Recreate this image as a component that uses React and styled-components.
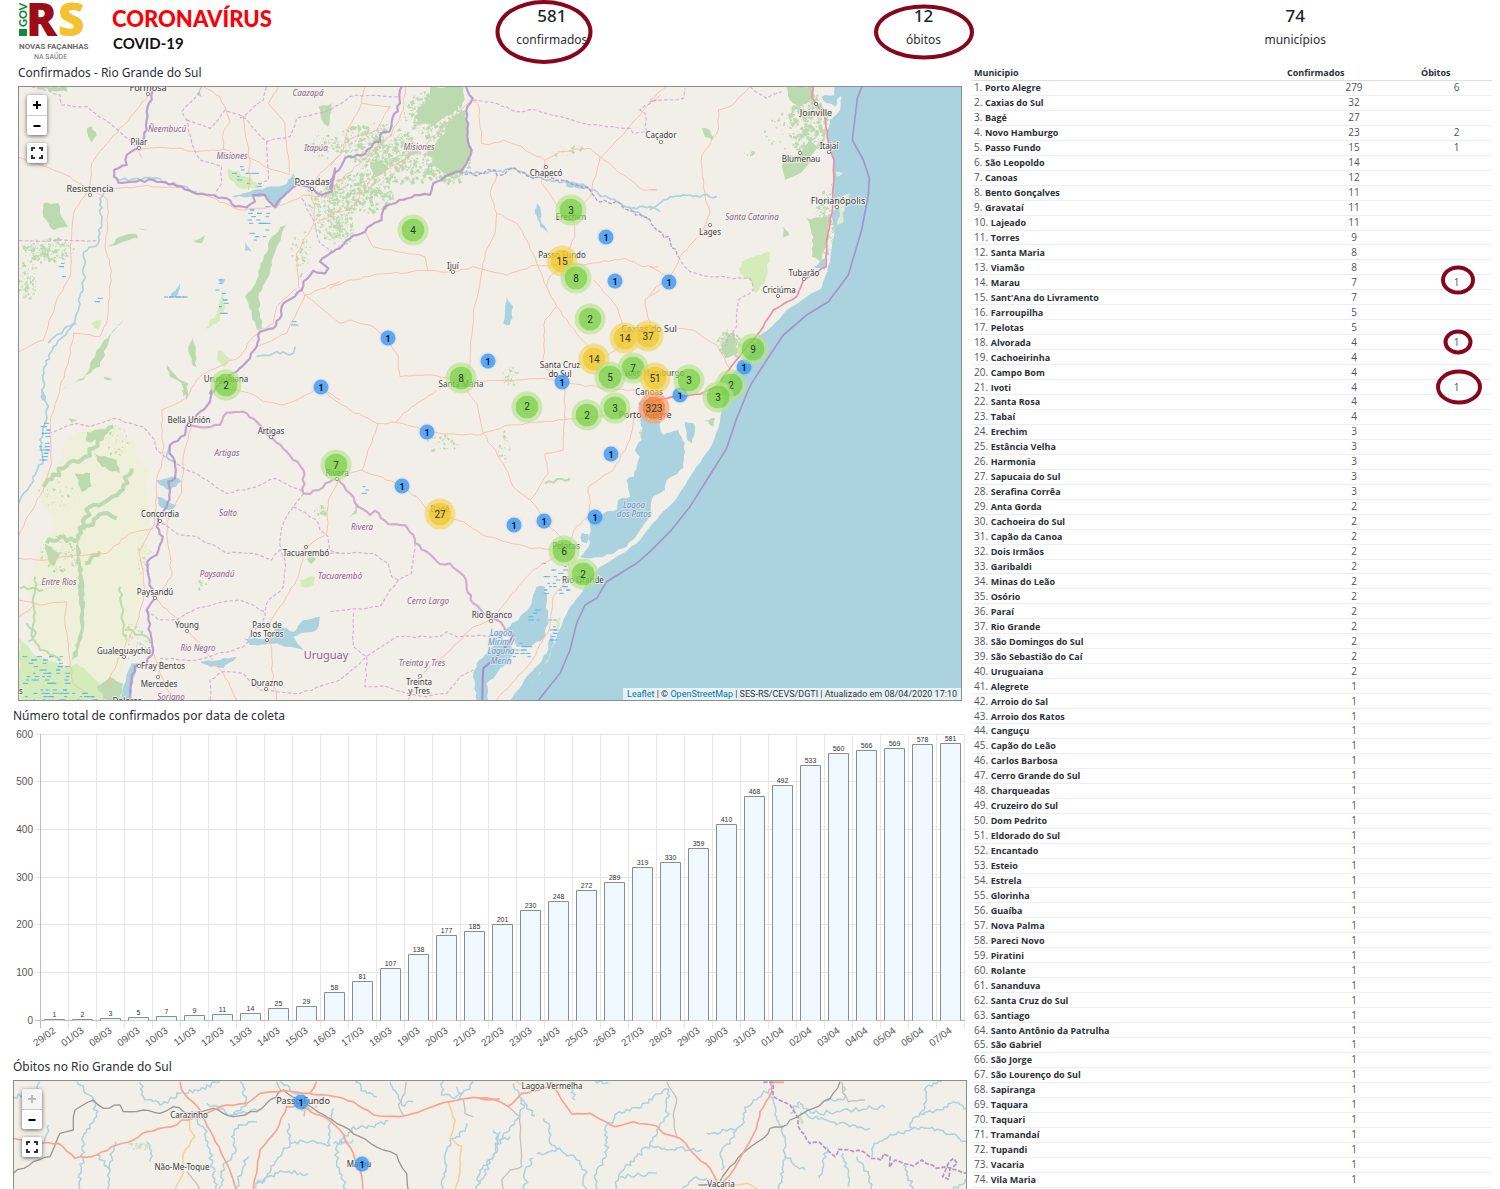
import React from "react";
import styled, { createGlobalStyle, css } from "styled-components";

const GlobalStyle = createGlobalStyle`
  *, *::before, *::after { box-sizing: border-box; }
  body { margin: 0; background: #fff; color: #2b2f36; font-family: "Noto Sans", "Open Sans", sans-serif; }
`;

/* ---------- layout ---------- */
const Page = styled.div`
  display: flex;
  flex-direction: column;
  min-height: 100vh;
`;
const Header = styled.header`
  display: grid;
  grid-template-columns: 366px repeat(3, 1fr);
  padding-right: 19px;
  height: 58px;
`;
const Counter = styled.div`
  position: relative;
  text-align: center;
  padding-top: 4px;
`;
const Total = styled.div`
  font-size: 17px;
  line-height: 24px;
  font-weight: 500;
  color: #212529;
`;
const Caption = styled.div`
  font-size: 12px;
  line-height: 24px;
`;
const Ring = styled.span`
  position: absolute;
  left: calc(50% + ${(p) => p.$dx}px);
  top: calc(50% + ${(p) => p.$dy}px);
  width: ${(p) => p.$w}px;
  height: ${(p) => p.$h}px;
  transform: translate(-50%, -50%);
  border: 4px solid #86061c;
  border-radius: 50%;
  pointer-events: none;
`;
const Main = styled.main`
  flex: 1;
  display: grid;
  grid-template-columns: 954fr 520fr;
  gap: 5px;
  padding: 0 8px 0 13px;
`;
const Column = styled.div`
  display: flex;
  flex-direction: column;
  min-width: 0;
`;
const Inset = styled.section`
  padding: 0 5px;
`;
const Title = styled.h2`
  margin: 6px 0 4px;
  font-size: 12px;
  line-height: 18px;
  font-weight: 400;
`;

/* ---------- maps ---------- */
const MapFrame = styled.div`
  position: relative;
  overflow: hidden;
  border: 1px solid #8b8f8c;
  background: #f2efe9;
  ${(p) =>
    p.$fill
      ? css`
          flex: 1 0 108px;
          border-bottom: 0;
        `
      : css`
          aspect-ratio: 944 / 615;
        `}
`;
const MapLayer = styled.div`
  position: absolute;
  top: 0;
  left: 0;
  width: 100%;
  aspect-ratio: ${(p) => p.$w} / ${(p) => p.$h};
`;
const MapSvg = styled.svg`
  display: block;
  width: 100%;
  height: 100%;
  font-family: "Noto Sans", "Open Sans", sans-serif;
`;
const Pin = styled.span`
  position: absolute;
  left: ${(p) => p.$x}%;
  top: ${(p) => p.$y}%;
  transform: translate(-50%, -50%);
  display: flex;
  align-items: center;
  justify-content: center;
  border-radius: 50%;
  font-family: Roboto, "Liberation Sans", sans-serif;
  font-size: 10px;
  line-height: 12px;
  color: #333;
`;
const Cluster = styled(Pin)`
  width: 31px;
  height: 31px;
  border: 4px solid ${(p) => p.$halo};
  background-clip: padding-box;
  background-color: ${(p) => p.$core};
`;
const Single = styled(Pin)`
  width: 15px;
  height: 15px;
  background: rgba(51, 150, 250, 0.8);
  box-shadow: 0 0 3px rgba(0, 0, 0, 0.15);
  font-size: 9px;
  font-weight: 700;
  color: #111;
`;
const Controls = styled.div`
  position: absolute;
  top: 8px;
  left: 8px;
  display: grid;
  gap: 8px;
`;
const ControlGroup = styled.div`
  display: grid;
  width: 20px;
  overflow: hidden;
  border-radius: 3px;
  background: #fff;
  box-shadow: 0 1px 4px rgba(0, 0, 0, 0.6);
`;
const ControlButton = styled.button`
  display: flex;
  align-items: center;
  justify-content: center;
  height: 20px;
  padding: 0;
  border: 0;
  background: #fff;
  color: #000;
  & + & { border-top: 1px solid #ccc; }
  &:disabled { background: #f4f4f4; color: #bbb; }
`;
const Attribution = styled.div`
  position: absolute;
  right: 0;
  bottom: 0;
  padding: 0 4px;
  background: rgba(255, 255, 255, 0.7);
  font-family: Roboto, "Liberation Sans", sans-serif;
  font-size: 9px;
  line-height: 12px;
  color: #333;
  a { color: #0078a8; text-decoration: none; }
`;

/* ---------- table ---------- */
const Aside = styled.aside`
  display: grid;
  padding: 8px 0 1px;
  min-width: 0;
`;
const Table = styled.table`
  width: 100%;
  height: 100%;
  table-layout: fixed;
  border-spacing: 0;
  font-family: "Open Sans", "Noto Sans", sans-serif;
  font-size: 10px;
  line-height: 13px;
`;
const Th = styled.th`
  width: ${(p) => p.$w};
  padding: 0 0 1px ${(p) => (p.$first ? 2 : 0)}px;
  border-bottom: 1px solid #dcdfe2;
  text-align: left;
  font-size: 9px;
  font-weight: 700;
`;
const Td = styled.td`
  position: relative;
  padding: 0;
  border-bottom: 1px solid #eceef0;
  text-align: center;
  color: #50545c;
`;
const Name = styled(Td)`
  padding-left: 2px;
  text-align: left;
  white-space: nowrap;
  b { font-size: 9px; font-weight: 700; color: #2b2f36; }
`;

const ChartSvg = styled.svg`
  display: block;
  width: 100%;
  font-family: "Liberation Sans", Arial, sans-serif;
`;
const LogoSvg = styled.svg`
  display: block;
  overflow: visible;
`;

/* ---------- data ---------- */
const CITIES = `Porto Alegre,279,6;Caxias do Sul,32;Bagé,27;Novo Hamburgo,23,2;Passo Fundo,15,1;São Leopoldo,14;Canoas,12;Bento Gonçalves,11;Gravataí,11;Lajeado,11;Torres,9;Santa Maria,8;Viamão,8;Marau,7,1;Sant'Ana do Livramento,7;Farroupilha,5;Pelotas,5;Alvorada,4,1;Cachoeirinha,4;Campo Bom,4;Ivoti,4,1;Santa Rosa,4;Tabaí,4;Erechim,3;Estância Velha,3;Harmonia,3;Sapucaia do Sul,3;Serafina Corrêa,3;Anta Gorda,2;Cachoeira do Sul,2;Capão da Canoa,2;Dois Irmãos,2;Garibaldi,2;Minas do Leão,2;Osório,2;Paraí,2;Rio Grande,2;São Domingos do Sul,2;São Sebastião do Caí,2;Uruguaiana,2;Alegrete,1;Arroio do Sal,1;Arroio dos Ratos,1;Canguçu,1;Capão do Leão,1;Carlos Barbosa,1;Cerro Grande do Sul,1;Charqueadas,1;Cruzeiro do Sul,1;Dom Pedrito,1;Eldorado do Sul,1;Encantado,1;Esteio,1;Estrela,1;Glorinha,1;Guaíba,1;Nova Palma,1;Pareci Novo,1;Piratini,1;Rolante,1;Sananduva,1;Santa Cruz do Sul,1;Santiago,1;Santo Antônio da Patrulha,1;São Gabriel,1;São Jorge,1;São Lourenço do Sul,1;Sapiranga,1;Taquara,1;Taquari,1;Tramandaí,1;Tupandi,1;Vacaria,1;Vila Maria,1`
  .split(";")
  .map((r) => r.split(","));

const ROW_RINGS = {
  Marau: { $w: 34, $h: 29, $dx: 1, $dy: -2 },
  Alvorada: { $w: 29, $h: 25, $dx: 1, $dy: 0 },
  Ivoti: { $w: 46, $h: 35, $dx: 2, $dy: 0 },
};

const VALUES = [1, 2, 3, 5, 7, 9, 11, 14, 25, 29, 58, 81, 107, 138, 177, 185, 201, 230, 248, 272, 289, 319, 330, 359, 410, 468, 492, 533, 560, 566, 569, 578, 581];
const two = (n) => String(n).padStart(2, "0");
const DATES = ["29/02", "01/03"];
for (let d = 8; d <= 31; d++) DATES.push(two(d) + "/03");
for (let d = 1; d <= 7; d++) DATES.push(two(d) + "/04");

/* Cluster colours by size */
const TONES = {
  g: ["rgba(122,210,70,.82)", "rgba(181,226,140,.65)"],
  y: ["rgba(240,200,40,.85)", "rgba(241,211,87,.65)"],
  o: ["rgba(241,128,45,.82)", "rgba(253,156,115,.7)"],
};
const CLUSTERS = [
  ["g", 4, 413, 230], ["g", 3, 571, 210], ["y", 15, 562, 261], ["g", 8, 576, 278],
  ["g", 2, 590, 319], ["y", 14, 625, 338], ["y", 37, 648, 336], ["y", 14, 594, 359], ["g", 9, 753, 349],
  ["g", 8, 461, 378], ["g", 2, 226, 385], ["g", 7, 633, 368], ["g", 5, 610, 377], ["y", 51, 655, 378],
  ["g", 3, 689, 380], ["g", 2, 731, 385], ["g", 3, 718, 397], ["g", 2, 527, 407], ["g", 2, 587, 415],
  ["g", 3, 615, 408], ["o", 323, 654, 408], ["g", 7, 336, 465], ["y", 27, 440, 514], ["g", 6, 564, 551], ["g", 2, 583, 574],
];
const SINGLES = [[606, 237], [615, 281], [669, 282], [388, 338], [488, 361], [562, 382], [321, 387], [744, 367], [680, 395], [427, 432], [611, 454], [402, 486], [514, 525], [544, 521], [595, 517]];

/* ---------- map drawing helpers ---------- */
/* A letter in a point list moves the origin to that sheet of the map. */
const SHEETS = { A: [0, 0], B: [960, 0], C: [1920, 0], E: [0, 930], F: [960, 930], G: [1920, 930], K: [1440, 0] };
function points(str) {
  let o = [0, 0];
  const out = [];
  str.split(/\s+/).forEach((t) => {
    if (!t) return;
    if (SHEETS[t]) o = SHEETS[t];
    else {
      const [x, y] = t.split(",").map(Number);
      if (!Number.isNaN(y)) out.push([x + o[0], y + o[1]]);
    }
  });
  return out;
}
function random(seed) {
  let s = seed * 9301 + 49297;
  return () => {
    s = (s * 1103515245 + 12345) % 2147483648;
    return s / 2147483648;
  };
}
function rough(str, amp = 4, step = 14, close = false) {
  const p = points(str);
  if (close) p.push(p[0]);
  const r = random(Math.round(p[0][0] + p[0][1] * 7));
  let d = `M${p[0][0]} ${p[0][1]}`;
  for (let i = 1; i < p.length; i++) {
    const [ax, ay] = p[i - 1];
    const [bx, by] = p[i];
    const len = Math.hypot(bx - ax, by - ay) || 1;
    const n = Math.max(1, Math.round(len / step));
    for (let k = 1; k <= n; k++) {
      const j = k === n ? 0 : (r() - 0.5) * 2 * amp;
      const x = ax + ((bx - ax) * k) / n - ((by - ay) / len) * j;
      const y = ay + ((by - ay) * k) / n + ((bx - ax) / len) * j;
      d += `L${x.toFixed(1)} ${y.toFixed(1)}`;
    }
  }
  return close ? d + "Z" : d;
}
function speckle(cx, cy, rx, ry, n, size) {
  const r = random(cx + cy * 3 + n);
  let d = "";
  for (let i = 0; i < n * 2; i++) {
    const a = r() * 6.283;
    const q = Math.pow(r(), 0.6);
    const x = cx + Math.cos(a) * rx * q;
    const y = cy + Math.sin(a) * ry * q;
    const s = size * 0.75 * (0.2 + r() * r() * 1.6);
    d += `M${x.toFixed(1)} ${y.toFixed(1)}l${s.toFixed(1)} ${(-s * r()).toFixed(1)}l${(s * r()).toFixed(1)} ${s.toFixed(1)}l${(-s).toFixed(1)} ${(s * r()).toFixed(1)}z`;
  }
  return d;
}
function marsh(cx, cy, rx, ry, n) {
  const r = random(cx * 2 + cy + n);
  let d = "";
  for (let i = 0; i < n; i++) {
    const x = cx + (r() * 2 - 1) * rx;
    const y = cy + Math.round((r() * 2 - 1) * (ry / 10)) * 10;
    d += `M${x.toFixed(0)} ${y.toFixed(0)}h${(8 + r() * 9).toFixed(0)}`;
  }
  return d;
}
const Lines = ({ list, amp, step, ...rest }) => (
  <g fill="none" strokeLinejoin="round" {...rest}>
    {list.map((s) => <path key={s} d={rough(s, amp, step)} />)}
  </g>
);
const Areas = ({ list, amp, step, ...rest }) => (
  <g {...rest}>
    {list.map((s) => <path key={s} d={rough(s, amp, step, true)} />)}
  </g>
);
const Speckles = ({ list, ...rest }) => (
  <g {...rest}>
    {list.map((s) => <path key={s.join()} d={speckle(...s)} />)}
  </g>
);

const NATIONAL = [
  "A 430,20 425,60 410,95 410,150 385,205 350,225 350,255 312,270 312,290 325,308 430,300 490,312 550,338 600,345 650,355 675,380 710,382 735,365 730,345 765,345 795,382 820,350 860,315 900,322 935,345 965,335 975,265 B 0,325 10,290 45,235 105,222 130,190 150,185 152,160 178,155 185,125 210,70 208,45 215,20",
  "B 408,20 428,55 412,80 412,170 425,210 410,250 390,275 355,285 310,310 300,345 255,345 175,375 160,390 155,420 125,435 105,455 60,475 30,505 0,520 A 965,515 930,545 955,565 945,580 910,572 880,605 875,630 820,670 815,705 790,745 750,755 740,800 710,845 670,880 640,905 600,940 E 605,0 600,35 560,75 535,100 525,135 480,165 478,190 495,215 495,265 475,275 480,305 470,350 450,375 440,410 458,440 440,495 412,515 418,585 435,625 410,660 415,690 430,780 410,820 375,830 365,870 362,935",
];
const URUGUAY = [
  "E 535,105 575,112 630,105 650,68 700,65 740,95 780,140 830,185 880,240 880,310 900,312 960,275 F 22,265 60,310 85,350 120,375 135,362 175,402 225,405 250,435 255,458 330,522 360,520 408,570 410,595 430,640 460,670 500,690 548,735",
];
const PROVINCES = [
  "A 65,20 150,45 155,75 230,80 300,130 385,205", "A 27,482 265,482",
  "A 575,20 550,60 515,95 530,120 545,190 570,240 635,260 635,310 615,340",
  "A 530,120 600,145 645,90 700,110 770,185 840,170 860,115 960,90 B 60,50 80,45 210,50",
  "A 770,185 775,300 740,320", "A 690,115 760,60 770,20", "A 875,355 915,430 930,490 965,515",
  "B 430,60 500,70 560,95 620,90 760,130 850,140 900,145 910,160 950,155 945,100 930,90 975,60 C 0,65 80,60 100,55 105,25",
  "C 300,20 350,55 395,35",
  "E 115,130 200,100 240,110 310,85 400,110 435,150 440,180 480,210 520,235 560,250 650,310 740,290 795,265 880,305",
  "E 410,660 445,690 500,690 560,655 620,640 690,630 765,665",
  "E 455,400 510,435 560,440 650,490 730,490 785,510 810,480 825,510 820,590 770,640 765,680 700,770 600,800 560,810 450,805",
  "E 880,310 850,350 820,400 810,450 815,480", "E 850,350 920,390 930,420 955,440 960,480 990,490",
  "F 0,490 60,490 130,490 175,520 185,560 205,570 245,550 250,500 255,458",
  "F 205,570 180,600 150,650 50,660 0,665",
  "F 70,670 70,770 110,800 200,740 330,740 350,725 380,740 500,735",
  "F 110,800 105,890 170,890 230,910 290,920 350,910 390,860 430,840",
  "E 600,930 600,870 640,845 700,850 750,900 870,910 990,870 F 110,800", "C 85,530 120,575 180,590 300,595 310,630 265,660 260,740 235,770 225,800",
];
const STATE_RIVER = ["B 390,275 430,285 495,270 500,285 555,265 600,290 690,300 720,310 780,330 800,360 870,370 910,395 960,420 990,455 C 60,480 85,530"];
const ROADS = [
  "A 415,45 380,90 300,180 245,250 240,320 190,400 185,470 180,590 140,660 100,780 27,815",
  "A 27,232 120,265 180,290 230,325 290,355 295,400 285,500 305,570 300,650 290,730 270,770 190,760 175,850 150,920 140,960 E 120,100 125,220 100,300 60,370 27,437",
  "A 300,330 400,318 510,322 600,350 690,390 750,385 830,370 880,345 925,350 960,340",
  "A 385,205 500,205 560,215 640,208 720,235 790,270 840,285", "A 385,205 395,232", "A 580,20 630,50 660,125 640,155 640,208",
  "A 805,20 775,70 825,130 840,280", "A 990,225 930,280 905,325", "A 905,325 915,420 860,520 865,620 885,645",
  "A 700,110 720,240 715,330", "A 990,390 920,430", "A 990,605 885,645 860,700 830,760 740,800",
  "A 885,645 940,690 990,730 B 60,720 130,740 180,790 205,830 210,890 300,885 400,905 460,905 560,900 640,895 720,910 830,925 920,930",
  "A 860,625 800,680 790,730 730,770 690,830 600,870 560,900 530,950 E 520,30 455,60 460,200 440,270 435,400 390,480 405,600 380,700 340,780 300,860 280,930",
  "E 545,100 520,200 515,310 470,400 485,560 440,620", "E 640,-5 720,10 760,35 820,45 900,10 930,-10 990,30",
  "E 27,505 110,510 200,495 290,490 360,430 430,415", "E 27,630 90,645 170,635 165,700 180,810 190,880 230,910",
  "E 27,680 80,640", "E 435,625 480,670 530,715 600,800 640,850 680,930", "E 985,270 955,330 950,430 890,470 860,570 780,700 785,840 800,930",
  "E 425,780 450,850 480,910",
  "B 105,20 95,70 50,160 40,210 0,260", "B 95,70 180,80 140,150 50,180", "B 225,20 220,90 180,170 100,240 0,330", "B 420,65 360,120 270,210 210,245 120,300 60,390 0,400",
  "B 425,60 445,75 455,190 475,195 520,180 560,195 645,240 690,215 780,205 810,230 870,280 940,330 980,330",
  "B 645,240 635,310 665,350 690,385", "B 810,230 780,350 725,400 735,470 700,550",
  "B 990,45 940,90 890,150 815,230", "B 500,285 480,340 500,400 495,460 465,520 450,610 430,700 420,850 400,900",
  "B 500,400 560,430 590,480 620,550 650,620 680,680 740,760 800,830", "B 0,625 60,600 150,582 295,572 380,575 430,560 530,585 620,555 760,555 885,535 940,560 985,560",
  "B 105,455 130,500 200,515 285,530 295,572", "B 680,680 645,720 640,860 700,900 705,990 F 700,180 645,190 655,250 600,330",
  "B 700,550 660,590 650,620", "B 790,600 860,680 880,740 890,770 960,740 945,660 990,630", "B 830,830 880,790 960,770",
  "C 0,560 35,580 60,590 90,530 150,465 180,400 160,320 155,230 205,150 205,90 240,80 300,20",
  "C 0,330 20,330", "C 0,645 40,600", "C 85,745 130,750 200,795 240,865", "C 0,60 50,20",
  "F -40,-10 60,60 140,100 200,98 250,110 330,130 450,135 540,105 700,90 790,80 880,70 960,60",
  "F 320,0 220,70 195,98", "F 145,100 110,200 95,240 30,260", "F 95,240 200,280 260,320 300,370 400,395 470,440 600,475 680,475",
  "F 410,0 440,40 460,130 520,220 550,290 600,330 650,400 700,450", "F 915,70 900,150 850,240 775,290 780,370 740,410 710,470 720,560 670,620 660,710 600,820 500,930",
  "F 690,490 610,540 480,690 430,710 350,790 280,850", "F 270,865 235,930", "G 0,40 60,20 150,12 220,10",
];
const RIVERS = [
  "A 300,315 270,355 275,420 265,490 222,515 222,600 195,720 160,770 130,800 100,870 100,960 E 95,0 115,50 90,150 100,210 27,340",
  "A 325,300 430,295 500,315 560,335", "A 740,830 790,820 850,820 855,800", "A 115,790 160,750 200,730",
  "B 400,280 500,275 555,265 600,290 720,310 780,330 870,370 960,420", "C 0,390 60,350 120,345 200,350", "B 900,385 960,380 990,395",
  "E 480,165 470,200 495,215", "F 760,430 765,455",
];
const WATERS = [
  "A 665,350 720,335 770,322 830,312 850,278 850,320 820,350 800,385 770,352 735,350", "A 705,485 725,515 705,512", "A 510,610 500,650 480,652", "A 625,598 645,598 635,615", "A 570,25 575,50 560,45",
  "B 620,370 630,380 635,430 655,460 630,440 615,400", "B 530,650 550,680 540,735 520,730 525,690", "B 700,300 760,310 780,325 710,320",
  "C 515,50 570,40 555,80 530,70", "C 490,560 525,535 525,570",
  "E 440,270 495,262 515,275 480,300 450,285", "E 440,320 475,335 500,345 475,360 450,350",
  "E 700,745 780,750 800,700 850,725 880,690 930,680 920,720 850,740 880,780 840,770 800,760 720,765", "E 570,815 630,810 680,800 640,835 600,830",
  "E 345,880 365,820 385,820 370,880 360,930 330,930",
  "F 935,90 985,100 G 40,135 85,120 105,160 100,235 50,270 45,300 10,318 0,370 F 930,420 890,470 820,500 770,505 750,500 780,460 780,400 805,375 860,360 865,330 900,320 890,270 912,260 930,200 915,180 935,150",
  "F 925,40 960,20 990,60 G 30,130 0,140 F 935,110", "G 105,95 130,100 135,120 125,160 112,150", "F 755,430 775,432 770,460 755,455",
  "F 650,640 645,590 620,590 605,640 570,680 555,695 530,715 550,745 560,770 600,770 640,745 655,690",
  "F 500,760 440,820 430,850 440,932 475,932 470,880 530,820 550,790 545,750", "F 660,730 650,790 600,850 540,932 556,932 640,840 672,760",
];
const FORESTS = [
  "A 100,370 145,370 150,400 175,440 130,450 100,410", "A 230,145 245,138 260,165 245,188", "A 290,505 330,470 380,462 385,475 340,485",
  "A 833,425 800,500 775,590 745,650 750,700 760,750 742,750 705,650 730,620 760,540 785,470",
  "A 340,718 300,770 270,860 155,930 225,895 260,810", "A 550,765 560,860 545,850 535,800", "A 470,855 500,890 535,910 530,960 515,910 480,890", "A 75,20 170,20 172,36 130,34",
  "A 925,80 965,70 955,140 935,120", "A 550,485 585,465 575,490", "A 385,445 410,450", "A 280,890 308,898 285,898",
  "B 370,110 408,90 412,170 425,210 390,275 355,290 330,270 290,220 330,180", "B 300,22 400,22 404,60 380,90 320,130 265,130 260,90 300,60", "B 120,260 150,240 175,265 140,290",
  "C 410,20 490,20 488,60 450,80 420,60", "C 395,220 450,230 478,180 500,200 470,260 440,285 405,300", "C 470,415 540,410 535,480 510,545 485,530 490,470", "C 400,440 418,465 400,472",
  "C 155,145 180,150 190,180 165,170", "C 215,790 250,755 262,820 225,835",
  "E 195,250 240,250 245,290 215,305", "E 250,190 320,210 328,250 275,230", "E 230,125 290,120 280,150 230,155", "E 205,440 222,600 224,700 202,800 185,812 212,720 206,600 198,480",
  "E 175,85 200,90 185,98", "E 890,505 918,505 905,522", "E 515,0 525,0 520,30", "E 260,890 300,860 340,880 330,930 290,930", "F 55,385 85,340 80,370", "G 165,90 195,85 190,110", "E 105,460 150,490 130,530 115,510",
];
const FOREST_STRIPS = ["E 100,290 160,235 225,200 310,110", "E 205,450 240,350 330,305 365,235", "E 205,450 150,440 110,460", "E 220,420 280,370 320,385", "E 225,520 270,485"];
const THIN_STRIPS = ["E 75,560 72,740 55,755", "E 330,590 345,740", "E 345,720 400,735 420,760", "E 30,595 100,600", "E 150,810 90,780 50,700", "F 645,280 720,265"];
const MEADOWS = [
  "A 655,265 710,290 750,320 690,325 660,300", "A 625,810 660,835 645,862 622,840", "A 640,620 645,680 620,730 585,745 620,700", "A 245,730 275,720 265,750",
  "C 275,545 360,515 345,610 315,640 300,600 270,580", "E 27,745 80,800 170,830 200,820 290,900 295,932 27,932", "E 870,570 915,560 910,585 875,590",
  "F 660,750 675,765 650,825 645,800", "F 680,690 692,680 685,720",
];

const FOREST_DOTS = [
  [1090, 190, 130, 60, 260, 8], [1170, 250, 130, 60, 260, 8], [1050, 340, 100, 60, 240, 8], [990, 450, 40, 50, 110, 6], [1270, 100, 90, 70, 220, 9], [1310, 230, 70, 80, 180, 9],
  [960, 400, 60, 80, 140, 7], [940, 190, 50, 50, 50, 5], [110, 510, 80, 35, 140, 7], [50, 600, 30, 60, 80, 6], [870, 520, 30, 70, 40, 6], [2390, 130, 60, 90, 160, 10], [2460, 370, 30, 60, 40, 7],
  [2340, 150, 80, 60, 30, 6], [2440, 440, 35, 80, 80, 7], [2155, 790, 36, 40, 90, 7], [1500, 890, 30, 30, 30, 6], [930, 350, 50, 40, 60, 6], [1670, 210, 60, 15, 18, 6], [1290, 1090, 50, 25, 26, 6],
  [150, 1420, 60, 60, 50, 6], [140, 1240, 60, 40, 24, 5], [320, 1080, 30, 50, 20, 5], [400, 1440, 25, 50, 30, 5], [1480, 1100, 20, 50, 20, 5], [370, 1680, 40, 60, 30, 6], [2220, 220, 20, 6, 5, 7], [930, 1290, 20, 15, 20, 6], [570, 1510, 18, 18, 16, 5], [1910, 1060, 30, 15, 14, 6],
];
const MARSHES = [[705, 290, 40, 35, 12], [740, 430, 34, 50, 22], [100, 1080, 12, 60, 22], [100, 1790, 70, 75, 60], [200, 1850, 70, 20, 18], [490, 651, 40, 3, 7], [630, 670, 14, 70, 12], [1630, 1500, 40, 50, 26], [1625, 1650, 12, 40, 12], [1530, 1720, 30, 30, 12], [1570, 1600, 18, 20, 6], [150, 570, 6, 25, 4], [258, 655, 6, 8, 3], [1060, 1230, 6, 12, 3], [850, 735, 15, 8, 3]];

const CITY_LABELS = [
  ["Formosa", 148, 91, 9], ["Resistencia", 90, 192, 9], ["Posadas", 312, 185, 9], ["Joinville", 816, 116, 9], ["Florianópolis", 838, 204, 9], ["Caxias do Sul", 649, 332, 9], ["Porto Alegre", 645, 418, 9],
  ["Pilar", 139, 145, 8], ["Chapecó", 546, 176, 8], ["Caçador", 661, 138, 8], ["Itajaí", 829, 149, 8], ["Blumenau", 801, 162, 8], ["Lages", 710, 235, 8], ["Tubarão", 804, 276, 8], ["Criciúma", 779, 293, 8],
  ["Erechim", 571, 220, 8], ["Passo Fundo", 562, 258, 8], ["Ijuí", 453, 269, 8], ["Santa Cruz", 560, 368, 8], ["do Sul", 560, 377, 8], ["Santa Maria", 461, 387, 8], ["Novo Hamburgo", 653, 376, 8], ["Canoas", 649, 395, 8],
  ["Uruguaiana", 226, 382, 8], ["Bella Unión", 189, 423, 8], ["Artigas", 271, 434, 8], ["Rivera", 337, 476, 8], ["Bagé", 440, 512, 8], ["Pelotas", 566, 549, 8], ["Rio Grande", 583, 583, 8], ["Concordia", 160, 517, 8],
  ["Tacuarembó", 306, 556, 8], ["Paysandú", 155, 595, 8], ["Young", 187, 628, 8], ["Paso de", 267, 628, 8], ["los Toros", 267, 637, 8], ["Gualeguaychú", 124, 654, 8], ["Fray Bentos", 163, 669, 8], ["Mercedes", 159, 687, 8],
  ["Durazno", 267, 686, 8], ["Rio Branco", 492, 618, 8], ["Treinta", 419, 685, 8], ["y Tres", 419, 694, 8], ["Dolores", 127, 704, 8], ["s", 21, 694, 8],
];
const REGION_LABELS = [
  ["Caazapá", 308, 96], ["Ñeembucú", 167, 132], ["Itapúa", 316, 151], ["Misiones", 232, 159], ["Misiones", 419, 150], ["Santa Catarina", 752, 220], ["Artigas", 227, 456], ["Salto", 228, 516], ["Paysandú", 217, 577], ["Entre Rios", 59, 585],
  ["Rio Negro", 198, 651], ["Tacuarembó", 340, 579], ["Rivera", 362, 530], ["Cerro Largo", 428, 604], ["Treinta y Tres", 422, 666], ["Soriano", 171, 700],
];
const TOWNS = [[148, 94], [139, 148], [90, 195], [312, 189], [816, 104], [546, 167], [661, 142], [829, 152], [800, 153], [837, 207], [710, 225], [804, 279], [778, 296], [453, 272], [189, 425], [271, 437], [337, 479], [160, 521], [306, 547], [155, 598], [187, 631], [267, 640], [124, 657], [139, 666], [158, 677], [266, 689], [491, 621], [420, 676]];

const Halo = ({ children, ...rest }) => (
  <g textAnchor="middle" stroke="#f7f5f1" strokeOpacity=".8" strokeWidth="2" paintOrder="stroke" strokeLinejoin="round" {...rest}>
    {children}
  </g>
);

const RegionMap = () => (
  <MapSvg viewBox="19 87 942 613" preserveAspectRatio="none" role="img" aria-label="Mapa do Rio Grande do Sul">
    <g transform="translate(10 80) scale(.333333)">
      <path fill="#eff0da" d={rough("E 90,270 200,130 330,110 420,240 420,400 400,600 350,800 280,930 180,900 60,740 60,560 130,400", 14, 30, true)} />
      <Areas list={MEADOWS} amp={5} step={14} fill="#d3ecba" />
      <Areas list={FORESTS} amp={4} step={12} fill="#bcdab0" />
      <Speckles list={FOREST_DOTS} fill="#bcdab0" />
      <Lines list={FOREST_STRIPS} amp={9} step={12} stroke="#bcdab0" strokeWidth="12" />
      <Lines list={THIN_STRIPS} amp={6} step={12} stroke="#bcdab0" strokeWidth="6" />
      <path
        fill="#aad3df"
        d={rough("C 555,10 552,45 575,50 570,90 540,120 532,160 540,210 552,240 550,280 548,330 560,380 545,400 555,450 548,490 540,545 525,590 515,625 470,650 410,690 365,740 325,770 310,800 290,840 240,890 G 215,60 205,115 180,175 130,245 80,325 30,375 0,410 F 930,450 880,490 810,530 780,560 760,600 720,650 700,690 680,740 660,800 630,850 590,890 545,940 G 960,940 C 960,10", 2, 16, true)}
      />
      <Areas list={["C 560,350 600,340 585,370 578,430 560,435 570,400", "C 555,275 578,280 560,290"]} amp={4} step={10} fill="#e3ead2" />
      <Areas list={WATERS} amp={4} step={12} fill="#aad3df" />
      <Lines list={RIVERS} amp={5} step={10} stroke="#aad3df" strokeWidth="5" />
      {MARSHES.map((m) => <path key={m.join()} d={marsh(...m)} stroke="#5fb2ee" strokeWidth="3" fill="none" />)}
      <Lines list={ROADS} amp={3} step={16} stroke="#fbb8a6" strokeWidth="2.6" />
      <Lines list={["C 490,20 487,55 525,110 535,200 552,240 548,380 530,480 528,560 460,600 440,650 370,690 330,755 300,790 240,865 200,920 150,942 70,950 0,965"]} amp={2} step={16} stroke="#ec8fa4" strokeWidth="5" />
      <Lines list={PROVINCES} amp={3} step={18} stroke="#d5a6d2" strokeOpacity=".85" strokeWidth="3.6" strokeDasharray="11 6" />
      <Lines list={STATE_RIVER} amp={7} step={11} stroke="#b79ac9" strokeWidth="4" strokeDasharray="11 5" />
      <Lines list={NATIONAL} amp={4} step={13} stroke="#b48fca" strokeOpacity=".85" strokeWidth="6.5" />
      <Lines list={URUGUAY} amp={4} step={14} stroke="#d3a0d0" strokeOpacity=".9" strokeWidth="6.5" />
      <Lines list={["F 548,735 540,755 500,800 460,835 457,940"]} amp={1} step={30} stroke="#a18fc6" strokeWidth="6" />
      <Lines
        list={["C 638,15 622,55 607,180 640,240 658,295 655,345 635,450 595,585 535,665 470,705 400,765 350,840 305,910 G 295,0 260,85 230,175 180,255 120,350 60,425 0,485 F 920,520 830,575 800,625 765,645 740,700 720,780 690,850 622,935"]}
        amp={0} step={100} stroke="#a893c9" strokeWidth="5"
      />
    </g>
    {TOWNS.map(([x, y]) => <circle key={x + "-" + y} cx={x} cy={y} r="1.7" fill="#fff" stroke="#666" strokeWidth=".8" />)}
    <Halo fill="#3a3a3a">
      {CITY_LABELS.map(([t, x, y, s]) => <text key={t + y} x={x} y={y} fontSize={s}>{t}</text>)}
    </Halo>
    <Halo fill="#8d618b" fontStyle="italic" fontSize="8">
      {REGION_LABELS.map(([t, x, y]) => <text key={t + x} x={x} y={y}>{t}</text>)}
    </Halo>
    <Halo fill="#8d618b" fontSize="11"><text x="326" y="659">Uruguay</text></Halo>
    <Halo fill="#6b8fc0" fontStyle="italic" fontSize="8" stroke="#dbe9ee">
      <text x="634" y="508">Lagoa</text><text x="634" y="517">dos Patos</text>
      <text x="501" y="636">Lagoa</text><text x="501" y="645">Mirim /</text><text x="501" y="654">Laguna</text><text x="501" y="664">Merín</text>
    </Halo>
  </MapSvg>
);

const D_RIVERS = [
  "230,95 280,145 290,200 250,260 250,330 235,380 245,420", "420,95 430,140 480,165 540,130 600,120 660,95", "120,95 115,130 40,140", "145,225 135,275", "290,315 330,360 345,275", "330,360 325,420",
  "440,275 452,310 450,335", "580,200 610,230 630,300 650,420", "620,160 700,195 740,165 730,110 720,95", "700,190 770,180", "770,215 715,225 695,260 705,310 670,350 660,420", "745,320 730,350 715,390 710,420",
  "865,220 870,280 830,330 800,380 760,415", "870,280 930,275 990,285 985,230 1000,175", "770,400 850,365 925,370", "1165,212 1100,235 1060,230 1010,290 1010,340 1040,420", "1000,280 1060,270", "840,95 870,120 900,130",
  "1065,95 1100,130 1130,140", "1170,95 1190,130 1205,165 1240,155", "1330,95 1325,135 1370,140 1400,120 1420,95", "1400,220 1380,260 1350,270 1335,330 1325,420", "1500,245 1480,320 1440,360 1430,420", "1370,110 1385,150",
  "K 100,100 125,145 130,175 60,270 30,340 0,400", "K 190,205 210,230 210,280 240,295 290,330 315,360 315,420", "K 170,312 240,295", "K 160,325 140,350 135,420", "K 40,240 60,270 90,260", "K 120,150 165,198",
  "K 565,118 520,140 480,175 410,190 375,240 380,300 350,370 345,420", "K 565,115 560,200 530,240 510,285 470,320 420,370 405,420", "K 510,285 560,300 640,295 665,300", "K 420,380 530,370", "K 610,420 640,385 680,385",
  "K 875,115 820,150 790,190 785,225 720,310 725,360", "K 680,250 770,240", "K 870,130 890,200 910,230 915,310 900,420", "K 960,190 1040,210 1110,230 1170,235", "K 960,160 1000,190 1080,185 1200,170 1215,172", "K 930,190 960,155",
  "K 915,320 975,360", "K 1040,290 1030,350 1018,385", "K 1090,310 1105,370 1105,410", "K 1130,320 1170,380 1175,420", "K 1385,95 1340,110 1340,150 1320,190 1380,180 1420,155 1462,175", "K 1320,190 1290,220 1300,235 1240,255 1180,290 1175,320",
  "K 1300,230 1380,240 1462,275", "K 1270,345 1285,380 1300,420", "K 1462,385 1420,420", "K 270,95 285,150", "K 345,95 385,98", "K 1035,150 1090,150 1090,110",
];
const D_ROADS = [
  "40,265 110,275 175,280 225,325 290,315 350,285 400,270 440,245 530,225 545,210 605,205", "540,95 545,120 600,180 640,260 680,340 710,420", "620,190 660,170 740,160 780,130 850,122 910,130 980,135 1060,155 1120,195 1200,200 1270,180 1350,155 1420,142 1500,147",
  "950,95 930,130", "905,165 860,170 830,240 780,300 770,370 760,420", "905,170 980,205 1020,240 1060,310 1080,360 1088,420",
  "K 0,145 45,150 85,170 125,130 210,110", "K 215,95 245,150 275,192 330,190 405,230 460,215 530,228 550,250 600,265 650,320 690,355 715,400", "K 870,95 875,125 840,185 830,235 800,290 750,375 730,395", "K 870,97 912,97",
];
const D_RAILS = ["40,370 100,335 150,320 180,250 220,240 225,180 280,150 310,175 360,165 370,185 430,180 480,190 520,170 570,190 640,175 700,200 770,185 800,160 850,120 940,175 1010,220 1080,260 1150,300 1190,315 1220,370 1225,420", "K 1080,95 1050,145 1000,175 930,210 920,225 870,235 850,265 800,300 750,350 720,395 710,402 655,405"];
const D_MINOR = ["830,95 845,125", "1218,95 1215,130 1195,165 1210,195", "1390,150 1395,190 1420,200", "560,365 590,400 600,420", "K 85,170 120,200 120,260 125,350 90,360 65,390 70,420", "K 560,95 590,145 580,200 590,265", "K 1085,95 1090,130 1105,155 1155,150", "915,180 912,200"];
const D_SECONDARY = ["568,205 570,240 585,260 550,310 550,370 525,420", "1345,155 1365,210 1350,265 1385,290 1380,370 1365,420", "935,180 880,165 870,140", "K 765,405 800,400 835,420", "K 110,95 125,105"];
const D_BORDER = ["K 850,97 878,97 880,140 930,165 955,205 955,230 990,280 1020,278 1065,320 1075,298 1150,305 1175,325 1205,330 1210,312 1230,320 1228,352 1245,330 1300,348 1325,330 1370,355 1400,350 1420,325 1432,340 1410,355 1405,388 1388,380 1400,350 1462,370"];
const DETAIL_LABELS = [["Lagoa Vermelha", 552, 1089, 8], ["Carazinho", 189, 1118, 8], ["Passo Fundo", 303, 1104, 9], ["Não-Me-Toque", 182, 1170, 8], ["Marau", 359, 1167, 8], ["Vacaria", 721, 1187, 8]];

const DetailMap = () => (
  <MapSvg viewBox="14 1081 952 300" preserveAspectRatio="none" role="img" aria-label="Mapa dos óbitos">
    <g transform="translate(0 1050) scale(.333333)">
      <Speckles list={[[410, 290, 35, 14, 30, 6], [2400, 208, 10, 10, 12, 7], [920, 170, 25, 12, 8, 6]]} fill="#c8e2b8" />
      <Lines list={D_RIVERS} amp={7} step={8} stroke="#aad3df" strokeWidth="4.5" />
      <Lines list={D_MINOR} amp={2} step={14} stroke="#c4c2c0" strokeWidth="4" />
      <Lines list={D_SECONDARY} amp={3} step={14} stroke="#f9cf93" strokeWidth="4.5" />
      <Lines list={D_RAILS} amp={4} step={18} stroke="#9a9896" strokeWidth="4" />
      <Lines list={D_ROADS} amp={3} step={18} stroke="#faa48f" strokeWidth="5" />
      <Lines list={D_BORDER} amp={3} step={16} stroke="#b393ca" strokeWidth="5" strokeDasharray="13 5" />
    </g>
    <Halo fill="#3a3a3a">
      {DETAIL_LABELS.map(([t, x, y, s]) => <text key={t} x={x} y={y} fontSize={s}>{t}</text>)}
    </Halo>
  </MapSvg>
);

const MapControls = ({ zoomInDisabled }) => (
  <Controls>
    <ControlGroup>
      <ControlButton aria-label="Aproximar" disabled={zoomInDisabled}>
        <svg width="8" height="8" viewBox="0 0 8 8"><path d="M4 0v8M0 4h8" stroke="currentColor" strokeWidth="2" /></svg>
      </ControlButton>
      <ControlButton aria-label="Afastar">
        <svg width="8" height="8" viewBox="0 0 8 8"><path d="M0.500 4h7" stroke="currentColor" strokeWidth="2" /></svg>
      </ControlButton>
    </ControlGroup>
    <ControlGroup>
      <ControlButton aria-label="Tela cheia">
        <svg width="14" height="14" viewBox="0 0 14 14" fill="none" stroke="#333" strokeWidth="2">
          <path d="M2 5V2h3M9 2h3v3M12 9v3H9M5 12H2V9" />
        </svg>
      </ControlButton>
    </ControlGroup>
  </Controls>
);

const Logo = () => (
  <LogoSvg width="300" height="58" viewBox="0 0 300 58" role="img" aria-label="GOV RS Novas Façanhas na Saúde, Coronavírus COVID-19">
    <rect x="19" y="29" width="8" height="7" fill="#0e8a3e" />
    <text transform="translate(27 27) rotate(-90)" fontFamily="Lato, sans-serif" fontWeight="900" fontSize="11" fill="#0e8a3e">GOV</text>
    <text x="26" y="36" fontFamily="Open Sans, sans-serif" fontWeight="800" fontSize="46" fill="#9c0c18">R</text>
    <text x="58" y="36" fontFamily="Open Sans, sans-serif" fontWeight="800" fontSize="46" fill="#f5c131">S</text>
    <text x="19" y="49" fontFamily="Roboto, sans-serif" fontWeight="700" fontSize="8" fill="#6b6b6b">NOVAS FAÇANHAS</text>
    <text x="34" y="59" fontFamily="Roboto, sans-serif" fontSize="7" fill="#6b6b6b">NA SAÚDE</text>
    <text x="112" y="27" fontFamily="Lato, sans-serif" fontWeight="900" fontSize="22" fill="#fb0007">CORONAVÍRUS</text>
    <text x="113" y="49" fontFamily="Lato, sans-serif" fontWeight="700" fontSize="15" fill="#111">COVID-19</text>
  </LogoSvg>
);

const X0 = 40.5;
const Y0 = 1020.5;
const STEP = 28;
const UNIT = 286 / 600;
const Chart = () => (
  <ChartSvg viewBox="13 729 954 323" role="img" aria-label="Número total de confirmados por data de coleta">
    <g stroke="#e6e6e6" strokeWidth="1">
      {[1, 2, 3, 4, 5, 6].map((k) => <path key={k} d={`M35 ${Math.round(Y0 - k * 100 * UNIT) - 0.5}H965`} />)}
      {DATES.map((d, i) => <path key={d} d={`M${X0 + (i + 1) * STEP} 734.500V1028`} />)}
    </g>
    <path d={`M${X0} 734V1028M35 ${Y0}H965`} stroke="#bdbdbd" fill="none" />
    <g fontSize="10" fill="#555" textAnchor="end">
      {[0, 100, 200, 300, 400, 500, 600].map((v) => <text key={v} x="33" y={Math.round(Y0 - v * UNIT) + 3}>{v}</text>)}
    </g>
    {VALUES.map((v, i) => {
      const x = X0 + i * STEP + 4;
      const y = Math.round(Y0 - v * UNIT) - 0.5;
      return (
        <g key={DATES[i]}>
          <path d={`M${x} ${Y0}V${y}H${x + 20}V${Y0}`} fill="#eff7ff" stroke="#8c8c8c" />
          <text x={x + 10} y={y - 3} fontSize="7" fill="#333" textAnchor="middle">{v}</text>
          <text transform={`translate(${x + 12} 1032) rotate(-36)`} fontSize="10" fill="#555" textAnchor="end">{DATES[i]}</text>
        </g>
      );
    })}
  </ChartSvg>
);

export default function App() {
  return (
    <Page>
      <GlobalStyle />
      <Header>
        <Logo />
        <Counter><Total>581</Total><Caption>confirmados</Caption><Ring $w={97} $h={64} $dx={-8} $dy={3} /></Counter>
        <Counter><Total>12</Total><Caption>óbitos</Caption><Ring $w={100} $h={55} $dx={1} $dy={3} /></Counter>
        <Counter><Total>74</Total><Caption>municípios</Caption></Counter>
      </Header>
      <Main>
        <Column>
          <Inset>
            <Title>Confirmados - Rio Grande do Sul</Title>
            <MapFrame>
              <RegionMap />
              {SINGLES.map(([x, y]) => <Single key={x + "-" + y} $x={((x - 19) / 942) * 100} $y={((y - 87) / 613) * 100}>1</Single>)}
              {CLUSTERS.map(([tone, n, x, y]) => (
                <Cluster key={x + "-" + y} $core={TONES[tone][0]} $halo={TONES[tone][1]} $x={((x - 19) / 942) * 100} $y={((y - 87) / 613) * 100}>{n}</Cluster>
              ))}
              <MapControls />
              <Attribution>
                <a href="#leaflet">Leaflet</a> | © <a href="#osm">OpenStreetMap</a> | SES-RS/CEVS/DGTI | Atualizado em 08/04/2020 17:10
              </Attribution>
            </MapFrame>
          </Inset>
          <Title>Número total de confirmados por data de coleta</Title>
          <Chart />
          <Title>Óbitos no Rio Grande do Sul</Title>
          <MapFrame $fill>
            <MapLayer $w={952} $h={300}>
              <DetailMap />
              <Single $x={((301 - 14) / 952) * 100} $y={((1102 - 1081) / 300) * 100}>1</Single>
              <Single $x={((362 - 14) / 952) * 100} $y={((1164 - 1081) / 300) * 100}>1</Single>
            </MapLayer>
            <MapControls zoomInDisabled />
          </MapFrame>
        </Column>
        <Aside>
          <Table>
            <thead>
              <tr><Th $first $w="315px">Municipio</Th><Th $w="134px">Confirmados</Th><Th>Óbitos</Th></tr>
            </thead>
            <tbody>
              {CITIES.map(([name, cases, deaths], i) => (
                <tr key={name}>
                  <Name>{i + 1}. <b>{name}</b></Name>
                  <Td>{cases}</Td>
                  <Td>{deaths}{ROW_RINGS[name] && <Ring {...ROW_RINGS[name]} />}</Td>
                </tr>
              ))}
            </tbody>
          </Table>
        </Aside>
      </Main>
    </Page>
  );
}
